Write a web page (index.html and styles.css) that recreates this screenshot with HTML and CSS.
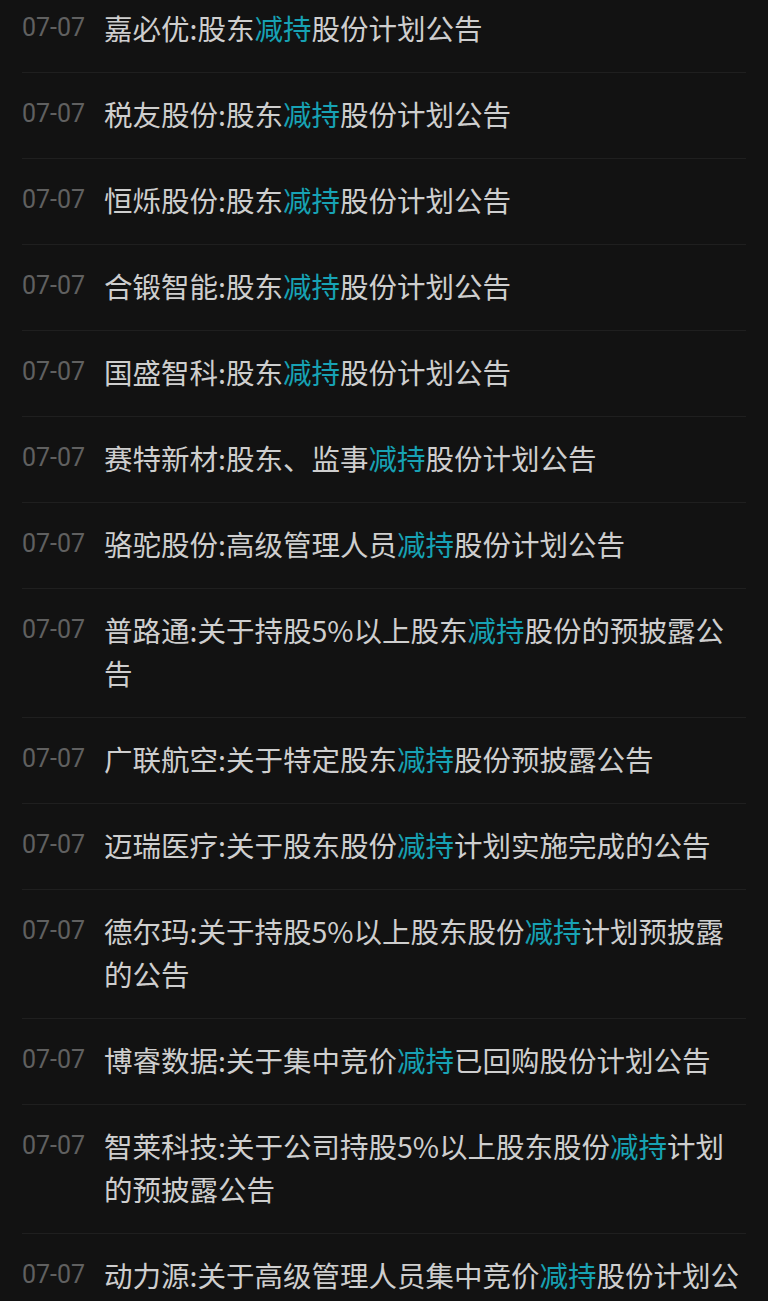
FILE: index.html
```html
<!DOCTYPE html>
<html lang="zh-CN">
<head>
  <meta charset="UTF-8" />
  <title>减持公告</title>
  <link rel="stylesheet" href="styles.css">
</head>
<body>
  <ul class="news-list">
    <li class="news-row"><span class="news-date">07-07</span><span class="news-title">嘉必优:股东<em>减持</em>股份计划公告</span></li>
    <li class="news-row"><span class="news-date">07-07</span><span class="news-title">税友股份:股东<em>减持</em>股份计划公告</span></li>
    <li class="news-row"><span class="news-date">07-07</span><span class="news-title">恒烁股份:股东<em>减持</em>股份计划公告</span></li>
    <li class="news-row"><span class="news-date">07-07</span><span class="news-title">合锻智能:股东<em>减持</em>股份计划公告</span></li>
    <li class="news-row"><span class="news-date">07-07</span><span class="news-title">国盛智科:股东<em>减持</em>股份计划公告</span></li>
    <li class="news-row"><span class="news-date">07-07</span><span class="news-title">赛特新材:股东、监事<em>减持</em>股份计划公告</span></li>
    <li class="news-row"><span class="news-date">07-07</span><span class="news-title">骆驼股份:高级管理人员<em>减持</em>股份计划公告</span></li>
    <li class="news-row"><span class="news-date">07-07</span><span class="news-title">普路通:关于持股5%以上股东<em>减持</em>股份的预披露公告</span></li>
    <li class="news-row"><span class="news-date">07-07</span><span class="news-title">广联航空:关于特定股东<em>减持</em>股份预披露公告</span></li>
    <li class="news-row"><span class="news-date">07-07</span><span class="news-title">迈瑞医疗:关于股东股份<em>减持</em>计划实施完成的公告</span></li>
    <li class="news-row"><span class="news-date">07-07</span><span class="news-title">德尔玛:关于持股5%以上股东股份<em>减持</em>计划预披露的公告</span></li>
    <li class="news-row"><span class="news-date">07-07</span><span class="news-title">博睿数据:关于集中竞价<em>减持</em>已回购股份计划公告</span></li>
    <li class="news-row"><span class="news-date">07-07</span><span class="news-title">智莱科技:关于公司持股5%以上股东股份<em>减持</em>计划的预披露公告</span></li>
    <li class="news-row"><span class="news-date">07-07</span><span class="news-title">动力源:关于高级管理人员集中竞价<em>减持</em>股份计划公告</span></li>
  </ul>
</body>
</html>
```

FILE: styles.css
```css
html, body {
  margin: 0;
  background-color: #121212;
  overflow: hidden;
}
body {
  font-family: "Noto Sans CJK SC", "Noto Sans", sans-serif;
}
.news-list {
  list-style: none;
  margin: -13px 0 0 0;
  padding: 0 22px;
}
.news-row {
  display: flex;
  align-items: flex-start;
  padding: 19px 0 23px 0;
  border-bottom: 1px solid #1f1f1f;
}
.news-date {
  flex: none;
  width: 82px;
  font-family: Roboto, "Liberation Sans", sans-serif;
  font-size: 25px;
  line-height: 43px;
  color: #606060;
}
.news-title {
  flex: 1;
  font-size: 28.5px;
  line-height: 43px;
  color: #cecece;
}
.news-title em {
  font-style: normal;
  color: #17a2b4;
}
```
